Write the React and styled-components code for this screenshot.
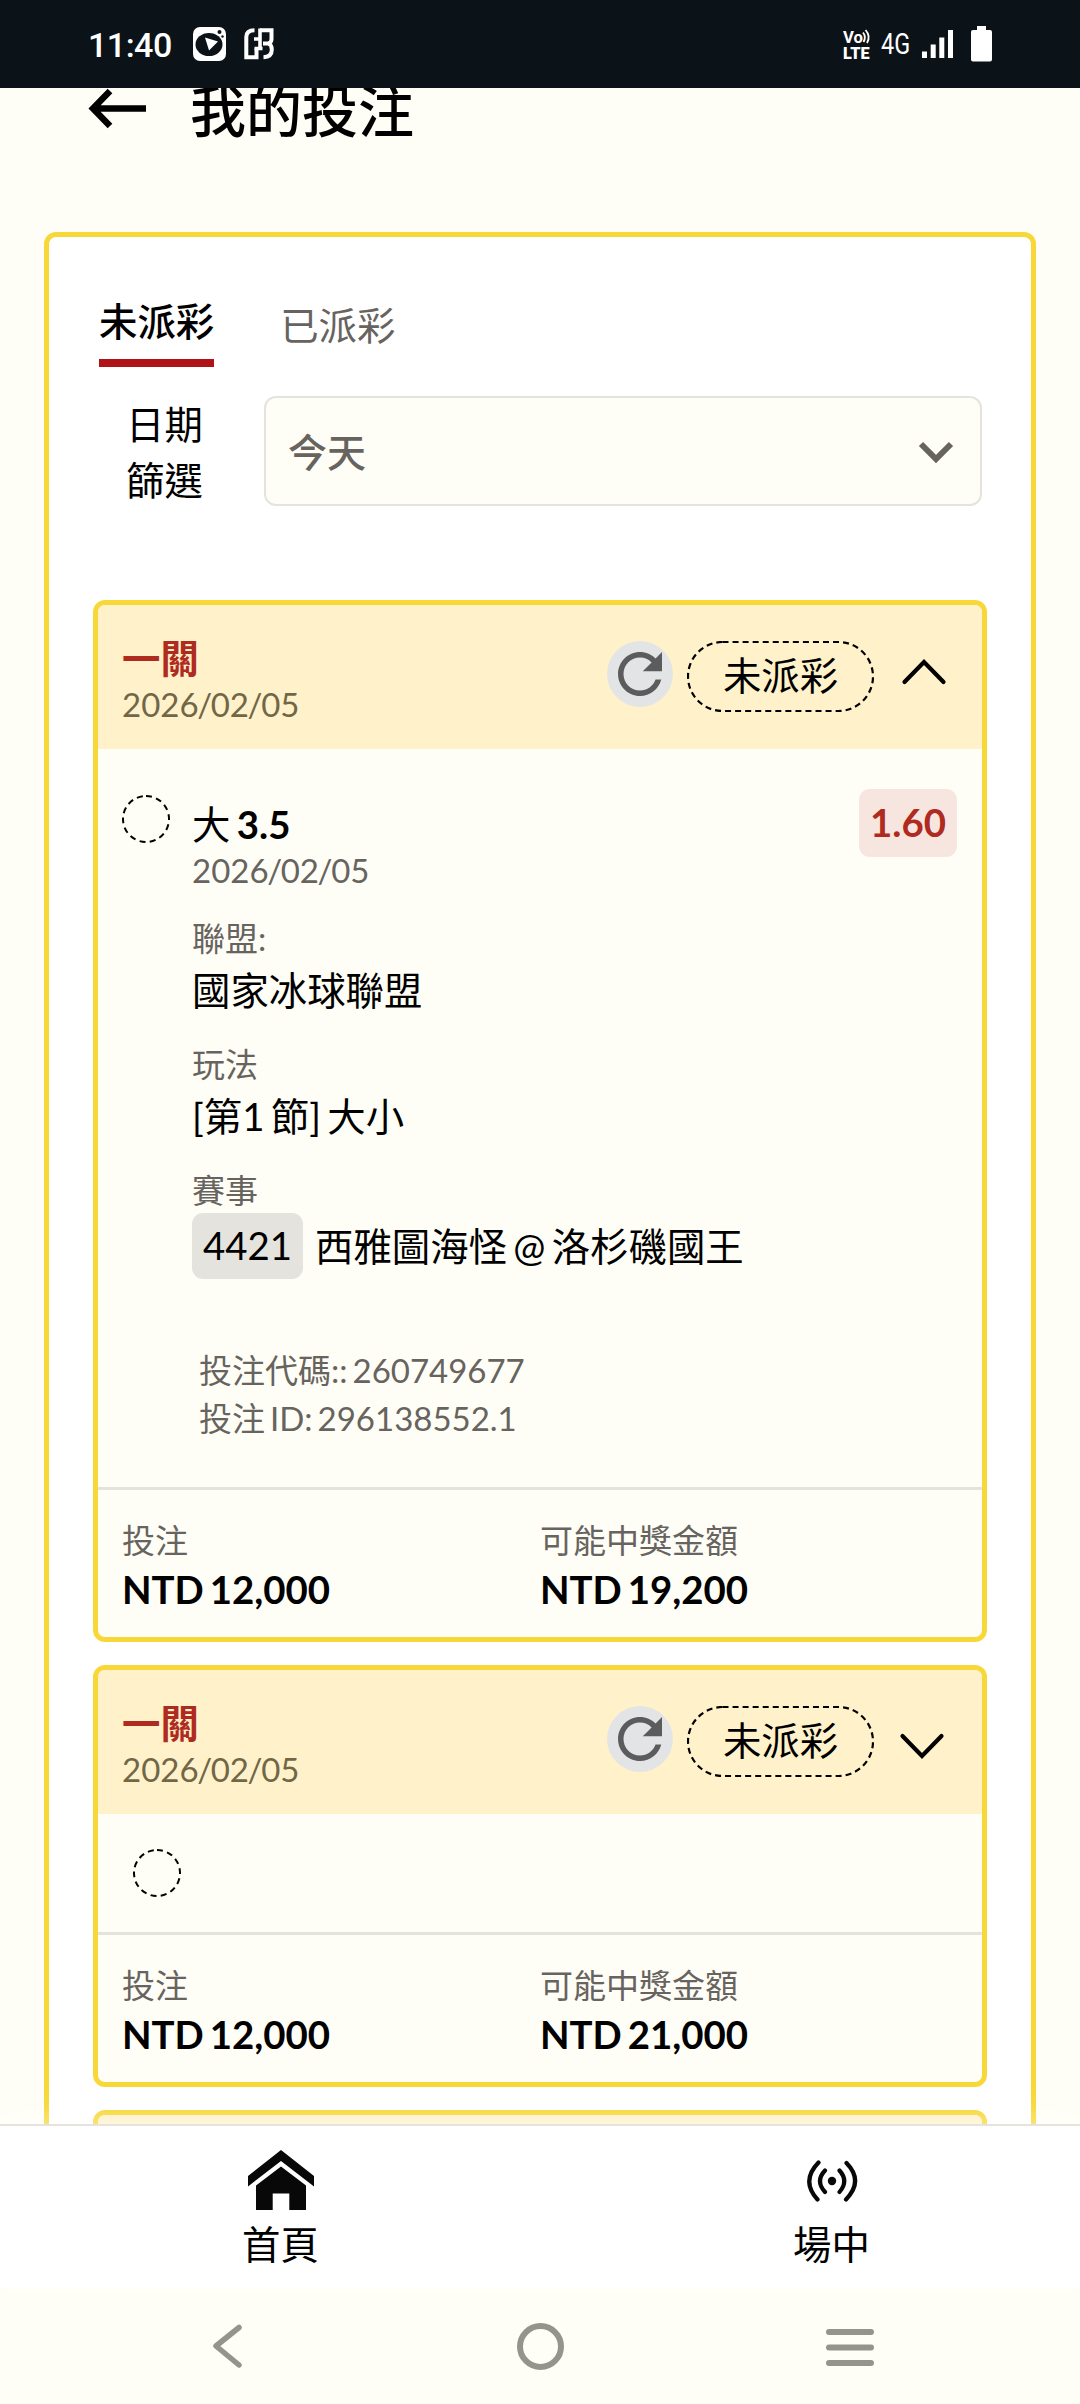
import React from "react";
import styled, { createGlobalStyle, css } from "styled-components";

const yellow = "#f8d839";
const cream = "#fffef6";
const line = "#e4e3dd";
const muted = "#67645f";
const red = "#af2a1f";

const GlobalStyle = createGlobalStyle`
  * { box-sizing: border-box; }
  body { margin: 0; background: ${cream}; }
`;

const Screen = styled.div`
  width: 1080px;
  height: 2404px;
  overflow: hidden;
  display: flex;
  flex-direction: column;
  background: ${cream};
  color: #000;
  font-family: Lato, "Noto Sans CJK TC", sans-serif;
  font-size: 38.4px;
  word-spacing: -0.09em;
`;

const StatusBar = styled.div`
  flex: none;
  height: 88px;
  padding: 0 88px 0 88px;
  display: flex;
  align-items: center;
  background: #0c1318;
  color: #fff;
  font-family: Roboto, sans-serif;
  svg { display: block; flex: none; overflow: visible; }
`;

const Clock = styled.span`
  font-size: 34px;
  font-weight: 500;
  line-height: 40px;
  width: 105px;
  letter-spacing: -0.5px;
  padding-top: 2px;
`;

const Spacer = styled.div`
  flex: ${(p) => (p.$w ? "none" : 1)};
  width: ${(p) => p.$w || 0}px;
`;

const Network = styled.span`
  width: 41px;
  font-size: 30px;
  line-height: 34px;
  transform: scaleX(0.78);
  transform-origin: left center;
`;

const Scroller = styled.main`
  flex: none;
  height: 2036px;
  overflow: hidden;
`;

const PageHeader = styled.header`
  height: 144px;
  padding-left: 88px;
  display: flex;
  align-items: flex-start;
  svg { display: block; }
`;

const Title = styled.h1`
  margin: -9px 0 0 43px;
  font-size: 56px;
  line-height: 64px;
  font-weight: 500;
`;

const Panel = styled.section`
  margin: 0 44px;
  height: 2100px;
  padding: 60px 44px 0;
  border: 5px solid ${yellow};
  border-radius: 12px;
  background: #fff;
`;

const Tabs = styled.nav`
  display: flex;
  align-items: flex-start;
  gap: 66px;
  padding-left: 6px;
`;

const Tab = styled.span`
  line-height: 48px;
  color: ${muted};
  padding-top: 4px;
  ${(p) =>
    p.$active &&
    css`
      color: #000;
      font-weight: 500;
      padding: 0 0 14px;
      border-bottom: 8px solid #b01317;
    `}
`;

const Filter = styled.div`
  display: flex;
  margin: 29px 5px 94px 33px;
`;

const FilterLabel = styled.span`
  width: 77px;
  height: 110px;
  line-height: 56px;
  margin-right: 61px;
  word-break: break-all;
`;

const Select = styled.div`
  flex: 1;
  height: 110px;
  padding: 0 26px 3px 22px;
  display: flex;
  align-items: center;
  justify-content: space-between;
  border: 2px solid ${line};
  border-radius: 12px;
  background: ${cream};
  color: ${muted};
  font-size: 39px;
  font-weight: 500;
  svg { margin-top: 5px; }
`;

const Card = styled.article`
  margin-bottom: 22.5px;
  border: 5px solid ${yellow};
  border-radius: 12px;
  background: ${cream};
  overflow: hidden;
`;

const CardHeader = styled.div`
  height: 144px;
  padding: 31px 35px 0 24px;
  display: flex;
  align-items: flex-start;
  background: #fff2cb;
`;

const CardName = styled.div`
  line-height: 44px;
  margin-bottom: 2px;
  font-weight: 700;
  color: ${red};
`;

const Small = styled.div`
  font-size: 33px;
  line-height: 44px;
  color: ${(p) => (p.$onYellow ? "#716747" : muted)};
`;

const Slash = styled.span`
  margin: 0 -1.4px;
`;

const Heading = styled.div`
  flex: 1;
`;

const Refresh = styled.span`
  width: 66px;
  height: 66px;
  margin: 5px 14px 0 0;
  border-radius: 50%;
  background: #e3e4e6;
  svg { display: block; }
`;

const Pill = styled.span`
  width: 187px;
  height: 71px;
  margin-top: 5px;
  text-align: center;
  line-height: 69px;
`;

const DashBox = styled.div`
  flex: none;
  width: 48px;
  height: 48px;
  svg { display: block; }
`;

const PillFrame = styled.span`
  position: relative;
  display: block;
  > svg { position: absolute; left: 0; top: 0; }
`;

const Toggle = styled.span`
  width: 46px;
  margin: ${(p) => (p.$open ? "22px 0 0 27px" : "31px 2px 0 25px")};
  svg { display: block; }
`;

const Leg = styled.div`
  height: 737.5px;
  padding: 46px 24px 0;
  display: flex;
`;

const LegBody = styled.div`
  flex: 1;
  margin: 6px 0 0 22px;
`;

const Pick = styled.div`
  line-height: 47px;
  b { font-weight: 700; }
`;

const Field = styled.div`
  margin-top: ${(p) => (p.$first ? 24 : 22)}px;
`;

const Value = styled.div`
  line-height: 60px;
`;

const Match = styled.div`
  display: flex;
  align-items: center;
  gap: 12px;
  margin-top: 1px;
  line-height: 70px;
  height: 66px;
`;

const MatchNo = styled.span`
  width: 111px;
  height: 66px;
  line-height: 65px;
  text-align: center;
  border-radius: 11px;
  background: #e5e3dd;
`;

const Codes = styled.div`
  margin: 67px 0 0 7px;
  ${Small} { line-height: 48px; }
`;

const Odds = styled.span`
  width: 98px;
  height: 68px;
  margin: -6px 1px 0 0;
  line-height: 67px;
  text-align: center;
  font-weight: 700;
  color: ${red};
  background: #f7e6df;
  border-radius: 11px;
`;

const Collapsed = styled.div`
  height: 118px;
  padding: 35px;
`;

const Totals = styled.div`
  height: 150.5px;
  padding: 28px 24px 0;
  border-top: 3px solid ${line};
  display: grid;
  grid-template-columns: 1fr 1fr;
`;

const Amount = styled.div`
  margin-top: 3px;
  line-height: 48px;
  font-weight: 700;
`;

const BottomNav = styled.nav`
  position: relative;
  flex: none;
  height: 164px;
  padding-left: 5px;
  display: grid;
  grid-template-columns: 551px 551px;
  background: #fff;
  border-top: 2px solid ${line};
  box-shadow: 0 -4px 24px rgba(255, 255, 255, 0.45);
`;

const NavItem = styled.div`
  display: flex;
  flex-direction: column;
  align-items: center;
  padding-top: 24px;
  line-height: 48px;
  svg { display: block; margin-bottom: 10px; }
`;

const SystemNav = styled.div`
  flex: none;
  height: 116px;
  padding-top: 33px;
  display: flex;
  background: ${cream};
  svg { display: block; }
`;

function Dashed({ w, h, dash, sw = 2 }) {
  return (
    <svg width={w} height={h} fill="none" stroke="#000" strokeWidth={sw}>
      <rect
        x="1" y="1" width={w - 2} height={h - 2}
        rx={(h - 2) / 2} strokeDasharray={dash}
      />
    </svg>
  );
}

function BetDate({ onYellow }) {
  return (
    <Small $onYellow={onYellow}>
      2026<Slash>/</Slash>02<Slash>/</Slash>05
    </Small>
  );
}

function BetCard({ open, payout, children }) {
  return (
    <Card>
      <CardHeader>
        <Heading>
          <CardName>一關</CardName>
          <BetDate onYellow />
        </Heading>
        <Refresh>
          <svg width="66" height="66" viewBox="0 0 24 24" fill="#5c5c5c">
            <path d="M17.65 6.35C16.2 4.9 14.21 4 12 4c-4.42 0-7.99 3.58-7.99 8s3.57 8 7.99 8c3.73 0 6.84-2.55 7.73-6h-2.08c-.82 2.33-3.04 4-5.65 4-3.31 0-6-2.69-6-6s2.69-6 6-6c1.66 0 3.14.69 4.22 1.78L13 11h7V4l-2.35 2.35z" />
          </svg>
        </Refresh>
        <Pill>
          <PillFrame>
            <Dashed w={187} h={71} dash="6 4.05" sw={2.2} />
            未派彩
          </PillFrame>
        </Pill>
        <Toggle $open={open}>
          <svg width="46" height="28" viewBox="0 0 46 28" fill="none" stroke="#000" strokeWidth="4.2" strokeLinecap="round">
            <path d={open ? "M3.5 24 L23 4 L42.5 24" : "M3.5 4 L23 24 L42.5 4"} />
          </svg>
        </Toggle>
      </CardHeader>
      {children}
      <Totals>
        <div>
          <Small>投注</Small>
          <Amount>NTD 12,000</Amount>
        </div>
        <div>
          <Small>可能中獎金額</Small>
          <Amount>{payout}</Amount>
        </div>
      </Totals>
    </Card>
  );
}

const Pending = () => (
  <DashBox>
    <Dashed w={48} h={48} dash="6 4.33" />
  </DashBox>
);

export default function App() {
  return (
    <Screen>
      <GlobalStyle />
      <StatusBar>
        <Clock>11:40</Clock>
        <svg width="33" height="34" viewBox="0 0 33 34">
          <rect width="33" height="34" rx="7" fill="#fff" />
          <ellipse cx="16" cy="17.5" rx="13.5" ry="11.5" fill="#0c1318" />
          <circle cx="26.5" cy="5" r="2" fill="#0c1318" />
          <circle cx="29.5" cy="9.5" r="1.2" fill="#0c1318" />
          <path d="M12 10.5 L25 14.5 L16 23.5 Z" fill="#fff" />
        </svg>
        <Spacer $w={18} />
        <svg width="30" height="32" viewBox="0 0 30 32" fill="none" stroke="#fff" strokeWidth="4">
          <path d="M10.500 2.300 Q2.300 2.300 2.300 9 V29.300 H12.500 V20.500" />
          <path d="M10 11 H16 V0.500 M10.500 20.500 H18.500 M16 11 V22" strokeWidth="3.600" />
          <path d="M16 2.300 H27.500 V11 Q27.500 14.500 24.500 15.500 H19 M24.500 15.500 Q27.800 17 27.800 21.500 Q27.800 29 19.500 29.300" />
        </svg>
        <Spacer />
        <svg width="27" height="30" viewBox="0 0 27 30" fill="#fff">
          <text x="0" y="14" fontSize="17" fontWeight="700" fontFamily="Roboto" textLength="20" lengthAdjust="spacingAndGlyphs">Vo</text>
          <text x="0" y="29.5" fontSize="17" fontWeight="900" fontFamily="Roboto" textLength="26.5" lengthAdjust="spacingAndGlyphs">LTE</text>
          <path d="M20 3.5 Q23.5 8 20.500 13 M22.5 1 Q28 7 24 14" fill="none" stroke="#fff" strokeWidth="1.8" />
        </svg>
        <Spacer $w={11} />
        <Network>4G</Network>
        <svg width="31" height="28" viewBox="0 0 31 28" fill="#fff">
          <path d="M0 21.5h5V28H0zM8.7 14.5h5V28h-5zM17.3 7.5h5V28h-5zM26 0h5v28h-5z" />
        </svg>
        <Spacer $w={18} />
        <svg width="21" height="36" viewBox="0 0 21 36" fill="#fff">
          <path d="M6 0h9v4h4q2 0 2 2v27.500q0 2-2 2H2q-2 0-2-2V6q0-2 2-2h4z" />
        </svg>
      </StatusBar>

      <Scroller>
        <PageHeader>
          <svg width="59" height="42" viewBox="0 0 59 42" fill="none" stroke="#000" strokeWidth="6.5">
            <path d="M58 20.500H5 M22 3 L5 20.500 L22 38" />
          </svg>
          <Title>我的投注</Title>
        </PageHeader>

        <Panel>
          <Tabs>
            <Tab $active>未派彩</Tab>
            <Tab>已派彩</Tab>
          </Tabs>
          <Filter>
            <FilterLabel>日期篩選</FilterLabel>
            <Select>
              今天
              <svg width="36" height="22" viewBox="0 0 36 22" fill="none" stroke={muted} strokeWidth="6">
                <path d="M3 3 L18 18 L33 3" />
              </svg>
            </Select>
          </Filter>

          <BetCard open payout="NTD 19,200">
            <Leg>
              <Pending />
              <LegBody>
                <Pick>大 <b>3.5</b></Pick>
                <BetDate />
                <Field $first>
                  <Small>聯盟:</Small>
                  <Value>國家冰球聯盟</Value>
                </Field>
                <Field>
                  <Small>玩法</Small>
                  <Value>[第1 節] 大小</Value>
                </Field>
                <Field>
                  <Small>賽事</Small>
                  <Match>
                    <MatchNo>4421</MatchNo>
                    <span>西雅圖海怪 @ 洛杉磯國王</span>
                  </Match>
                </Field>
                <Codes>
                  <Small>投注代碼:: 260749677</Small>
                  <Small>投注 ID: 296138552.1</Small>
                </Codes>
              </LegBody>
              <Odds>1.60</Odds>
            </Leg>
          </BetCard>

          <BetCard payout="NTD 21,000">
            <Collapsed>
              <Pending />
            </Collapsed>
          </BetCard>

          <Card>
            <CardHeader />
          </Card>
        </Panel>
      </Scroller>

      <BottomNav>
        <NavItem>
          <svg width="66" height="60" viewBox="0 0 66 60" fill="#080808">
            <path d="M33 0 L66 26 V36.500 L33 11 L0 36.500 V26 Z" />
            <path d="M33 16.500 L58 35.500 V60 H41.300 V43.500 H24.700 V60 H8 V35.500 Z" />
          </svg>
          首頁
        </NavItem>
        <NavItem>
          <svg width="66" height="60" viewBox="0 0 66 60" fill="none" stroke="#080808" strokeWidth="4.2" strokeLinecap="round">
            <circle cx="33" cy="31" r="4.200" fill="#080808" stroke="none" />
            <path d="M26 20.500 Q16 31 26 42 M40.500 20.500 Q50 31 40.500 42 M19.500 12.500 Q1.500 31 18.500 49.500 M47.500 13 Q65 31 47 49.500" />
          </svg>
          場中
        </NavItem>
      </BottomNav>

      <SystemNav>
        <Spacer $w={211} />
        <svg width="32" height="50" viewBox="0 0 32 50" fill="none" stroke="#94938d" strokeWidth="5.500" strokeLinecap="round" strokeLinejoin="round">
          <path d="M28 6.500 L5 25 L28 44" />
        </svg>
        <Spacer $w={273} />
        <svg width="50" height="50" viewBox="0 0 50 50" fill="none" stroke="#94938d" strokeWidth="6">
          <circle cx="24.500" cy="25.500" r="20.500" />
        </svg>
        <Spacer $w={259} />
        <svg width="50" height="50" viewBox="0 0 50 50" fill="none" stroke="#94938d" strokeWidth="6" strokeLinecap="round">
          <path d="M4 11 H46 M4 26.500 H46 M4 42 H46" />
        </svg>
      </SystemNav>
    </Screen>
  );
}
